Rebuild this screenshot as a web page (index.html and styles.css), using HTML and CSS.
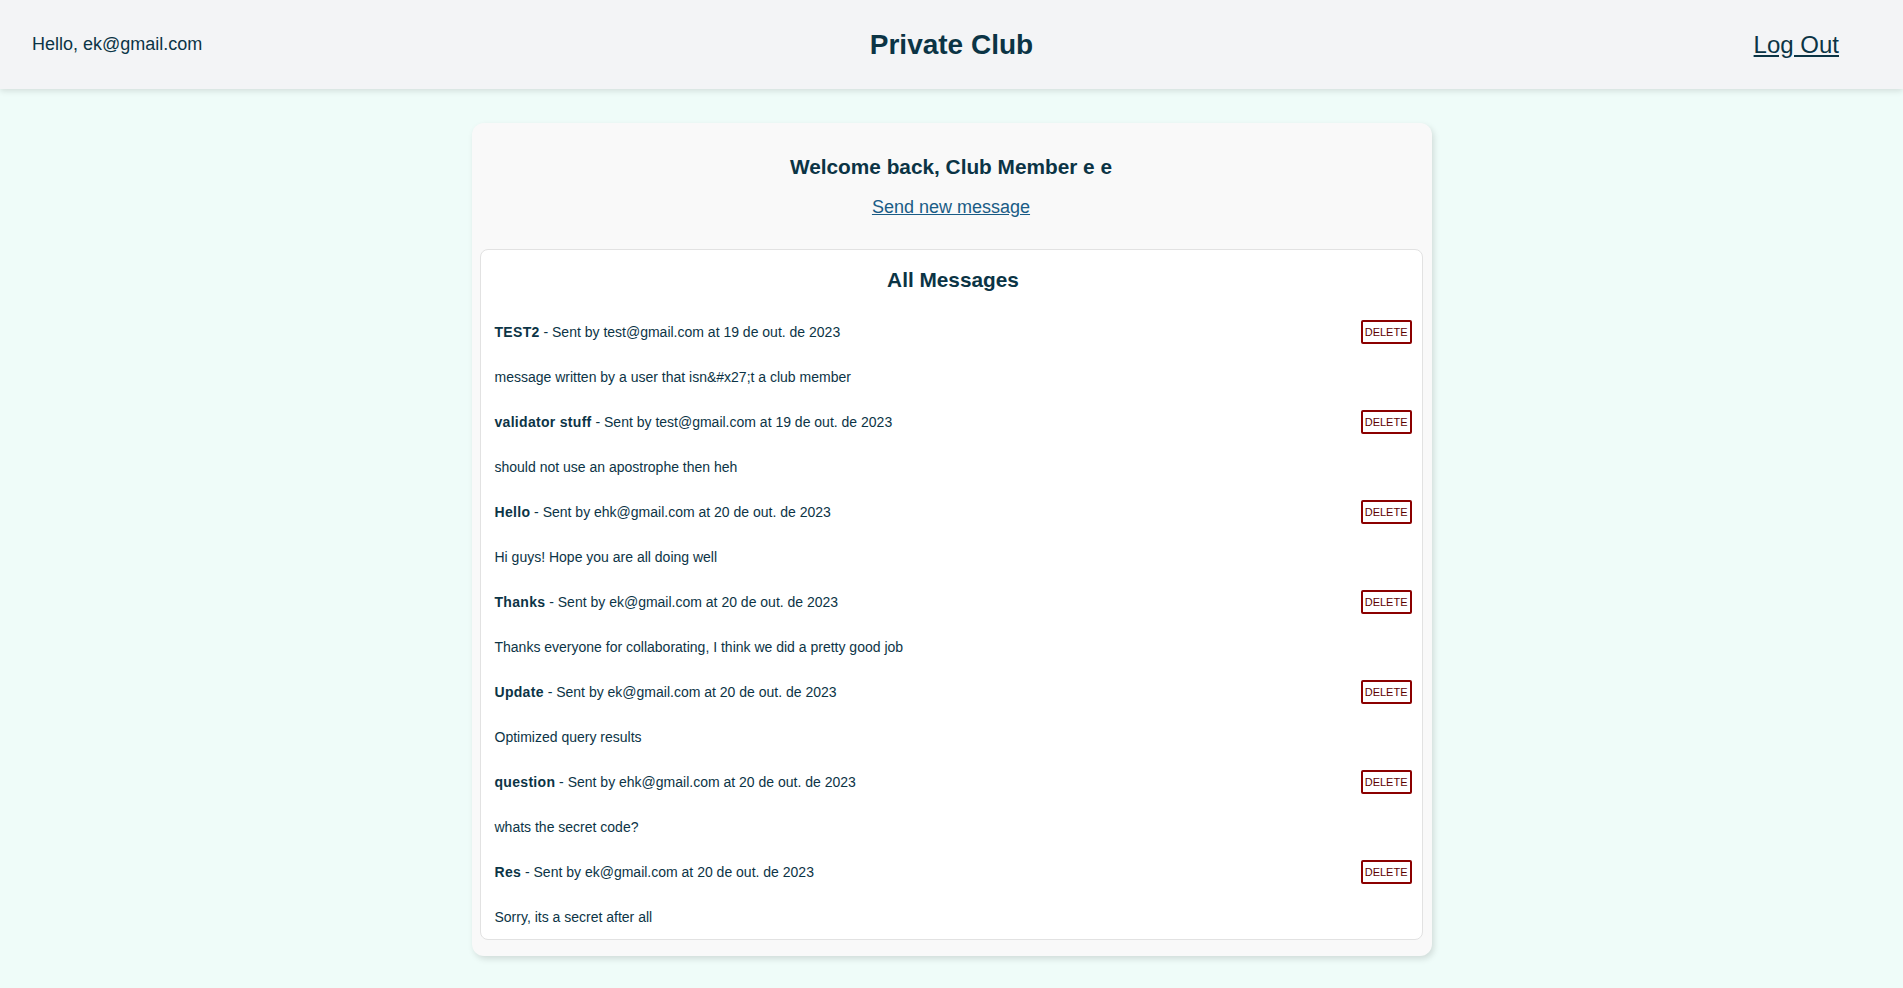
FILE: index.html
```html
<!DOCTYPE html>
<html lang="en">
<head>
<meta charset="utf-8">
<title>Private Club</title>
<link rel="stylesheet" href="styles.css">
</head>
<body>
<header class="topbar">
  <div class="greeting">Hello, ek@gmail.com</div>
  <div class="brand">Private Club</div>
  <a class="logout" href="#">Log Out</a>
</header>
<main class="page">
  <section class="card">
    <h1 class="welcome">Welcome back, Club Member e e</h1>
    <a class="send-link" href="#">Send new message</a>
    <div class="messages">
      <h2 class="messages-title">All Messages</h2>

      <div class="msg-head"><span><b>TEST2</b> - Sent by test@gmail.com at 19 de out. de 2023</span><button class="delete">DELETE</button></div>
      <div class="msg-body">message written by a user that isn&amp;#x27;t a club member</div>

      <div class="msg-head"><span><b>validator stuff</b> - Sent by test@gmail.com at 19 de out. de 2023</span><button class="delete">DELETE</button></div>
      <div class="msg-body">should not use an apostrophe then heh</div>

      <div class="msg-head"><span><b>Hello</b> - Sent by ehk@gmail.com at 20 de out. de 2023</span><button class="delete">DELETE</button></div>
      <div class="msg-body">Hi guys! Hope you are all doing well</div>

      <div class="msg-head"><span><b>Thanks</b> - Sent by ek@gmail.com at 20 de out. de 2023</span><button class="delete">DELETE</button></div>
      <div class="msg-body">Thanks everyone for collaborating, I think we did a pretty good job</div>

      <div class="msg-head"><span><b>Update</b> - Sent by ek@gmail.com at 20 de out. de 2023</span><button class="delete">DELETE</button></div>
      <div class="msg-body">Optimized query results</div>

      <div class="msg-head"><span><b>question</b> - Sent by ehk@gmail.com at 20 de out. de 2023</span><button class="delete">DELETE</button></div>
      <div class="msg-body">whats the secret code?</div>

      <div class="msg-head"><span><b>Res</b> - Sent by ek@gmail.com at 20 de out. de 2023</span><button class="delete">DELETE</button></div>
      <div class="msg-body">Sorry, its a secret after all</div>
    </div>
  </section>
</main>
</body>
</html>
```
FILE: styles.css
```css
* { box-sizing: border-box; }

html, body {
  margin: 0;
  padding: 0;
}

body {
  background: #effcf9;
  font-family: "Liberation Sans", Arial, sans-serif;
  color: #0c3446;
}

.topbar {
  height: 89px;
  background: #f3f4f6;
  box-shadow: 0 2px 6px rgba(0, 0, 0, 0.12);
  display: grid;
  grid-template-columns: 1fr auto 1fr;
  align-items: center;
  padding: 0 32px;
  position: relative;
}

.greeting {
  font-size: 18px;
  justify-self: start;
}

.brand {
  font-size: 28px;
  font-weight: bold;
  color: #0b3445;
}

.logout {
  justify-self: end;
  margin-right: 32px;
  font-size: 24px;
  color: #0b3445;
  text-decoration: underline;
}

.page {
  display: flex;
  justify-content: center;
  padding: 34px 0 20px;
}

.card {
  width: 960px;
  background: #f9f9f9;
  border-radius: 12px;
  box-shadow: 2px 3px 6px rgba(0, 0, 0, 0.13);
  padding: 32px 9px 16px 8px;
  display: flex;
  flex-direction: column;
  align-items: center;
}

.welcome {
  margin: 0;
  font-size: 20.8px;
  line-height: 24px;
  font-weight: bold;
  color: #0b3445;
}

.send-link {
  margin-top: 18px;
  font-size: 18px;
  line-height: 20px;
  color: #1a5c86;
  text-decoration: underline;
}

.messages {
  margin-top: 32px;
  align-self: stretch;
  background: #ffffff;
  border: 1px solid #e2e2e2;
  border-radius: 8px;
  padding: 0 10px 0 14px;
}

.messages-title {
  margin: 18px 0 17px;
  text-align: center;
  font-size: 20.8px;
  line-height: 24px;
  font-weight: bold;
  color: #0b3445;
}

.msg-head,
.msg-body {
  height: 45px;
  display: flex;
  align-items: center;
  justify-content: space-between;
  font-size: 14px;
  color: #0c3446;
}

.msg-head b {
  font-weight: bold;
  letter-spacing: 0.3px;
}

.delete {
  height: 24px;
  padding: 0 2px;
  font-family: "Liberation Sans", Arial, sans-serif;
  font-size: 11px;
  line-height: 20px;
  color: #5e0000;
  background: #ffffff;
  border: 2px solid #8b0000;
  border-radius: 2px;
  cursor: pointer;
}
```
